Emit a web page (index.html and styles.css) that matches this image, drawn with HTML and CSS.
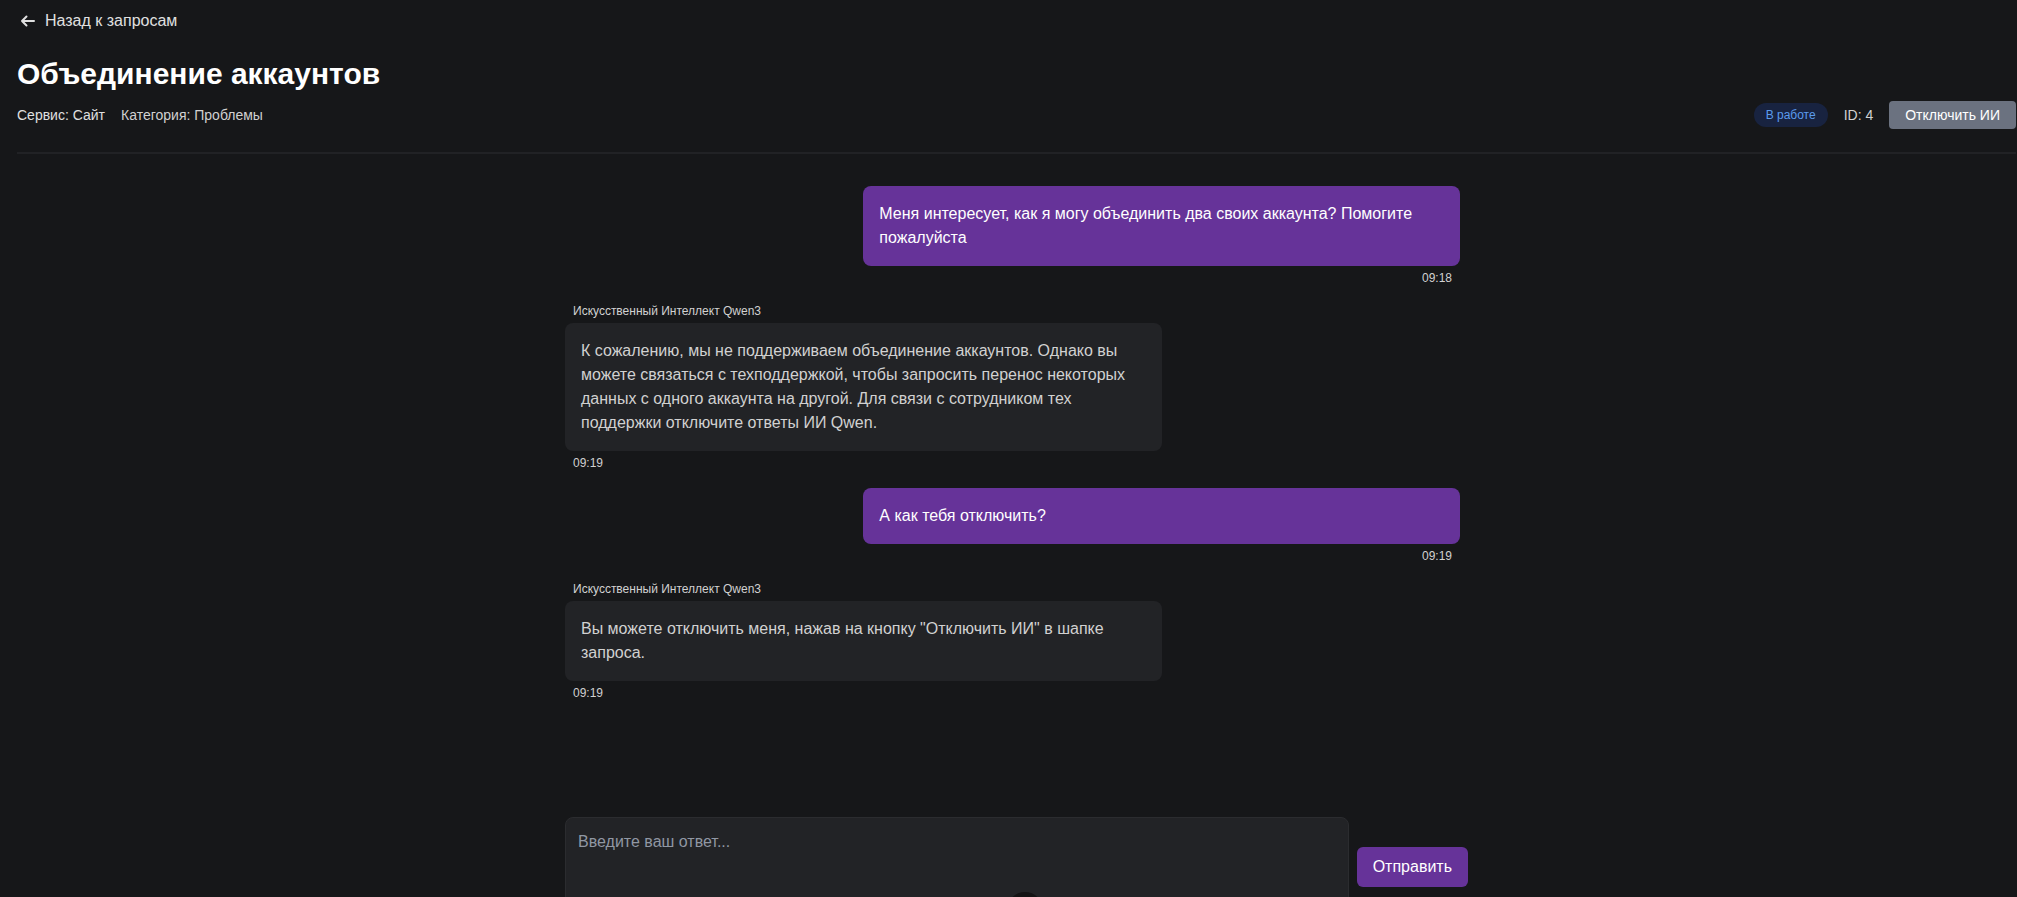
FILE: index.html
```html
<!DOCTYPE html>
<html lang="ru">
<head>
<meta charset="utf-8">
<title>Объединение аккаунтов</title>
<link rel="stylesheet" href="styles.css">
</head>
<body>
<div class="page">
  <header class="header">
    <a class="back" href="#">
      <svg class="back-icon" viewBox="0 0 16 16" aria-hidden="true"><path d="M14 8H2M6.5 3.5 2 8 6.5 12.5"/></svg>
      Назад к запросам
    </a>
    <h1 class="title">Объединение аккаунтов</h1>
    <div class="meta">
      <div class="meta-info">
        <span class="service">Сервис: Сайт</span>
        <span>Категория: Проблемы</span>
      </div>
      <div class="meta-actions">
        <span class="badge">В работе</span>
        <span class="ticket">ID: 4</span>
        <button class="toggle" type="button">Отключить ИИ</button>
      </div>
    </div>
  </header>
  <main class="chat">
    <div class="messages">
      <article class="message own">
        <p class="bubble">Меня интересует, как я могу объединить два своих аккаунта? Помогите пожалуйста</p>
        <time class="time">09:18</time>
      </article>
      <article class="message">
        <span class="author">Искусственный Интеллект Qwen3</span>
        <p class="bubble">К сожалению, мы не поддерживаем объединение аккаунтов. Однако вы можете связаться с техподдержкой, чтобы запросить перенос некоторых данных с одного аккаунта на другой. Для связи с сотрудником тех поддержки отключите ответы ИИ Qwen.</p>
        <time class="time">09:19</time>
      </article>
      <article class="message own">
        <p class="bubble">А как тебя отключить?</p>
        <time class="time">09:19</time>
      </article>
      <article class="message">
        <span class="author">Искусственный Интеллект Qwen3</span>
        <p class="bubble">Вы можете отключить меня, нажав на кнопку "Отключить ИИ" в шапке запроса.</p>
        <time class="time">09:19</time>
      </article>
    </div>
    <form class="reply">
      <textarea class="field" aria-label="Ваш ответ" placeholder="Введите ваш ответ..."></textarea>
      <button class="send" type="button">Отправить</button>
    </form>
  </main>
</div>
<div class="handle"></div>
</body>
</html>
```
FILE: styles.css
```css
* { box-sizing: border-box; }
body {
  margin: 0;
  background: #161719;
  color: #d1d1d1;
  font: 16px/24px "Liberation Sans", Arial, sans-serif;
}
.page {
  display: flex;
  flex-direction: column;
  height: 100vh;
  padding: 9px 1px 0 17px;
  overflow: hidden;
}
.header {
  flex: none;
  padding-bottom: 23px;
  border-bottom: 2px solid #212225;
}
.back {
  display: inline-flex;
  align-items: center;
  gap: 9px;
  padding-left: 3px;
  color: #e0e0e0;
  text-decoration: none;
}
.back-icon {
  width: 16px;
  height: 16px;
  fill: none;
  stroke: currentColor;
  stroke-width: 2;
  stroke-linecap: round;
  stroke-linejoin: round;
}
.title {
  margin: 20px 0 9px;
  color: #fff;
  font-size: 30px;
  line-height: 36px;
}
.meta, .meta-info, .meta-actions { display: flex; align-items: center; gap: 16px; }
.meta { justify-content: space-between; font-size: 14px; line-height: 20px; }
.service { color: #e0e0e0; }
.badge {
  padding: 4px 12px;
  border-radius: 12px;
  background: #182340;
  color: #5b9bed;
  font-size: 12px;
  line-height: 16px;
}
.toggle {
  padding: 4px 16px;
  border: 0;
  border-radius: 4px;
  background: #6b7280;
  color: #fff;
  font: 14px/20px "Liberation Sans", Arial, sans-serif;
}
.chat {
  display: flex;
  flex: 1;
  flex-direction: column;
  justify-content: space-between;
  width: 100%;
  max-width: 903px;
  margin: 0 auto;
}
.messages {
  display: flex;
  flex-direction: column;
  gap: 17px;
  padding: 32px 8px 0 0;
}
.message {
  display: flex;
  flex-direction: column;
  gap: 4px;
  width: 66.667%;
}
.own { align-self: flex-end; }
.bubble {
  margin: 0;
  padding: 16px;
  border-radius: 8px;
  background: #222326;
}
.own .bubble { background: #663399; color: #fff; }
.author, .time { padding: 0 8px; font-size: 12px; line-height: 16px; }
.own .time { align-self: flex-end; }
.reply {
  display: flex;
  align-items: flex-end;
  gap: 8px;
  height: 80px;
}
.field {
  flex: 1;
  align-self: flex-start;
  height: 112px;
  padding: 12px;
  border: 1px solid #2b2c2f;
  border-radius: 8px;
  outline: 0;
  resize: none;
  background: #222326;
  color: #d1d1d1;
  font: inherit;
}
.field::placeholder { color: #9097a3; }
.send {
  margin-bottom: 10px;
  padding: 8px 16px;
  border: 0;
  border-radius: 6px;
  background: #663399;
  color: #fff;
  font: inherit;
}
.handle {
  position: fixed;
  bottom: -31px;
  left: calc(50% - 2px);
  width: 36px;
  height: 36px;
  border-radius: 50%;
  background: #141314;
}
```
